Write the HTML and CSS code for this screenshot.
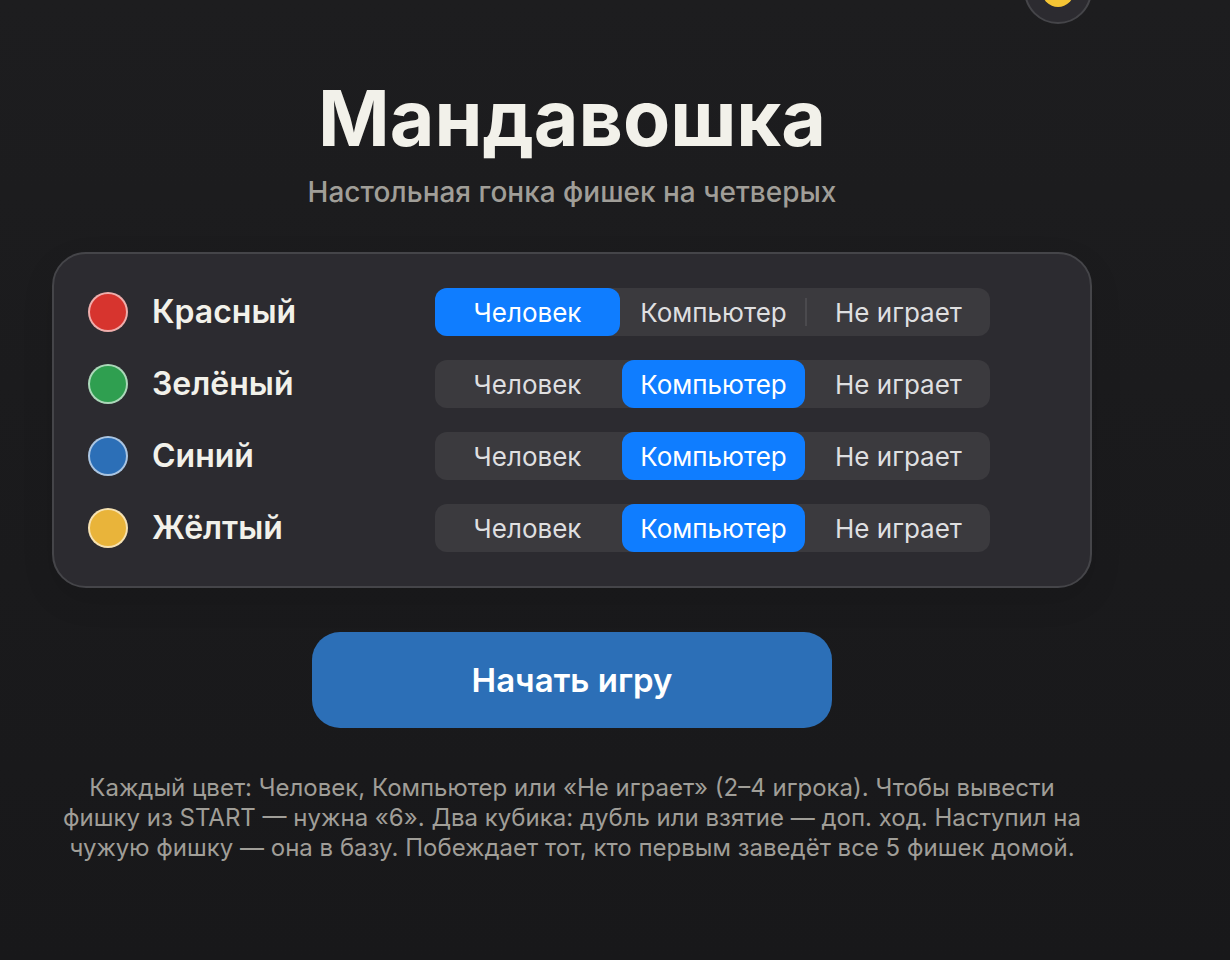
FILE: index.html
```
<!DOCTYPE html>
<html lang="ru">
<head>
    <meta charset="UTF-8">
    <meta name="viewport" content="width=device-width, initial-scale=1.0">
    <title>Мандавошка</title>
    <link rel="stylesheet" href="styles.css">
</head>
<body>
    <div class="container">
        <header class="topbar">
            <button type="button" class="round-button" aria-label="Тема">
                <svg viewBox="0 0 40 40" aria-hidden="true">
                    <circle cx="20" cy="21" r="16" fill="#f5c535"/>
                </svg>
            </button>
        </header>

        <h1>Мандавошка</h1>
        <p class="subtitle">Настольная гонка фишек на четверых</p>

        <form class="setup">
            <div class="players">
                <fieldset class="player">
                    <span class="chip chip-red"></span>
                    <span class="player-name" id="nameRed">Красный</span>
                    <div class="segmented" role="radiogroup" aria-labelledby="nameRed">
                        <label><input type="radio" name="red" checked><span>Человек</span></label>
                        <label><input type="radio" name="red"><span>Компьютер</span></label>
                        <label><input type="radio" name="red"><span>Не играет</span></label>
                    </div>
                </fieldset>
                <fieldset class="player">
                    <span class="chip chip-green"></span>
                    <span class="player-name" id="nameGreen">Зелёный</span>
                    <div class="segmented" role="radiogroup" aria-labelledby="nameGreen">
                        <label><input type="radio" name="green"><span>Человек</span></label>
                        <label><input type="radio" name="green" checked><span>Компьютер</span></label>
                        <label><input type="radio" name="green"><span>Не играет</span></label>
                    </div>
                </fieldset>
                <fieldset class="player">
                    <span class="chip chip-blue"></span>
                    <span class="player-name" id="nameBlue">Синий</span>
                    <div class="segmented" role="radiogroup" aria-labelledby="nameBlue">
                        <label><input type="radio" name="blue"><span>Человек</span></label>
                        <label><input type="radio" name="blue" checked><span>Компьютер</span></label>
                        <label><input type="radio" name="blue"><span>Не играет</span></label>
                    </div>
                </fieldset>
                <fieldset class="player">
                    <span class="chip chip-yellow"></span>
                    <span class="player-name" id="nameYellow">Жёлтый</span>
                    <div class="segmented" role="radiogroup" aria-labelledby="nameYellow">
                        <label><input type="radio" name="yellow"><span>Человек</span></label>
                        <label><input type="radio" name="yellow" checked><span>Компьютер</span></label>
                        <label><input type="radio" name="yellow"><span>Не играет</span></label>
                    </div>
                </fieldset>
            </div>
            <button type="button" class="start-button">Начать игру</button>
        </form>

        <p class="rules">Каждый цвет: Человек, Компьютер или «Не играет» (2–4 игрока). Чтобы вывести фишку из START — нужна «6». Два кубика: дубль или взятие — доп. ход. Наступил на чужую фишку — она в базу. Побеждает тот, кто первым заведёт все 5 фишек домой.</p>
    </div>
</body>
</html>
```

FILE: styles.css
```
:root {
    --background: #1d1d1f;
    --background-end: #18181a;
    --panel: #2c2b30;
    --panel-border: #454549;
    --text: #f2f1ea;
    --muted: #a09e98;
    --accent: #0f7dff;
    --start: #2c6fb7;
}

* {
    box-sizing: border-box;
    margin: 0;
    padding: 0;
}

body {
    font-family: Inter, sans-serif;
    min-height: 100vh;
    background: linear-gradient(var(--background), var(--background-end));
    color: var(--text);
    overflow-x: hidden;
}

.container {
    padding: 0 138px 40px 52px;
    text-align: center;
}

.topbar {
    display: flex;
    justify-content: flex-end;
    margin-top: -44px;
}

.round-button {
    display: flex;
    align-items: center;
    justify-content: center;
    width: 68px;
    height: 68px;
    border: 2px solid var(--panel-border);
    border-radius: 50%;
    background: var(--panel);
    cursor: pointer;
}

.round-button svg {
    width: 40px;
    height: 40px;
}

h1 {
    margin-top: 46px;
    font-size: 77px;
    line-height: 96px;
    font-weight: 700;
}

.subtitle {
    margin-top: 10px;
    font-size: 28px;
    line-height: 32px;
    font-weight: 500;
    color: var(--muted);
}

.players {
    display: flex;
    flex-direction: column;
    gap: 24px;
    margin-top: 44px;
    padding: 34px;
    border: 2px solid var(--panel-border);
    border-radius: 34px;
    background: var(--panel);
    box-shadow: 0 12px 32px rgba(0, 0, 0, 0.1);
}

.player {
    display: flex;
    align-items: center;
    height: 48px;
    border: none;
    text-align: left;
}

.chip {
    flex: none;
    width: 40px;
    height: 40px;
    margin-right: 24px;
    border: 2px solid rgba(255, 255, 255, 0.6);
    border-radius: 50%;
}

.chip-red { background-color: #d7342e; }
.chip-green { background-color: #2f9f50; }
.chip-blue { background-color: #2c6fb7; }
.chip-yellow { background-color: #e9b43a; }

.player-name {
    width: 283px;
    padding-bottom: 2px;
    font-size: 32px;
    font-weight: 600;
}

.segmented {
    display: grid;
    grid-template-columns: repeat(3, 1fr);
    width: 555px;
    height: 48px;
    border-radius: 12px;
    background: #3b3a3e;
    color: #dfdfe0;
}

.segmented label {
    position: relative;
    cursor: pointer;
}

.segmented label + label {
    padding-left: 2px;
}

.segmented input {
    position: absolute;
    opacity: 0;
}

.segmented span {
    display: flex;
    align-items: center;
    justify-content: center;
    height: 48px;
    border-radius: 12px;
    font-size: 26px;
}

.segmented input:checked + span {
    background: var(--accent);
    color: white;
}

/* thin line between two neighbours that are both off */
.segmented label:not(:has(:checked)) + label:not(:has(:checked))::before {
    content: "";
    position: absolute;
    left: 0;
    top: 10px;
    width: 2px;
    height: 28px;
    background: #4b4a4e;
}

.start-button {
    width: 50%;
    height: 96px;
    margin-top: 44px;
    border: none;
    border-radius: 28px;
    background: var(--start);
    color: white;
    font-family: inherit;
    font-size: 33px;
    font-weight: 600;
    cursor: pointer;
}

.rules {
    margin-top: 45px;
    font-size: 24px;
    line-height: 30px;
    color: var(--muted);
}
```
